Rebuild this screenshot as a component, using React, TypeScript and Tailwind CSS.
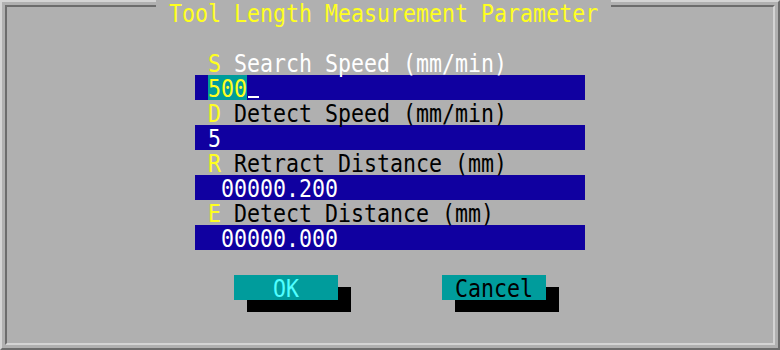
import React from "react";

const T = ({ children, className = "" }: { children: React.ReactNode; className?: string }) => (
  <span className={"inline-block origin-left scale-x-[0.9] translate-y-[2px] whitespace-pre " + className}>{children}</span>
);

const Label = ({ k, text, active }: { k: string; text: string; active?: boolean }) => (
  <div className="h-[25px] flex pl-[13px]">
    <div className="w-[13px]">
      <T className="text-[#ffff20]">{k}</T>
    </div>
    <div className="pl-[13px]">
      <T className={active ? "text-white" : "text-black"}>{text}</T>
    </div>
  </div>
);

const Field = ({ children }: { children: React.ReactNode }) => (
  <div className="h-[25px] w-[390px] bg-[#1000a0] flex pl-[13px] text-white">{children}</div>
);

export default function App() {
  return (
    <div
      className="relative w-[780px] h-[350px] bg-[#b0b0b0] overflow-hidden text-[24px] leading-[25px]"
      style={{ fontFamily: '"DejaVu Sans Mono", monospace' }}
    >
      <div className="w-full h-full border-2 border-t-[#d4d4d4] border-l-[#d4d4d4] border-r-[#6c6c6c] border-b-[#6c6c6c] p-[3px]">
        <div className="w-full h-full border-2 border-t-[#6c6c6c] border-l-[#6c6c6c] border-r-[#d4d4d4] border-b-[#d4d4d4] pt-[43px] pl-[188px]">
          <div className="w-[390px] flex flex-col">
            <Label k="S" text="Search Speed (mm/min)" active />
            <Field>
              <div className="w-[39px] h-[25px] bg-[#009c9c]">
                <T className="text-[#ffff20]">500</T>
              </div>
              <div className="w-[13px] h-[25px] pl-[1px] pt-[21px]">
                <div className="w-[11px] h-[2px] bg-white" />
              </div>
            </Field>
            <Label k="D" text="Detect Speed (mm/min)" />
            <Field>
              <T>5</T>
            </Field>
            <Label k="R" text="Retract Distance (mm)" />
            <Field>
              <T> 00000.200</T>
            </Field>
            <Label k="E" text="Detect Distance (mm)" />
            <Field>
              <T> 00000.000</T>
            </Field>
            <div className="h-[25px]" />
            <div className="flex pl-[39px] gap-[104px]">
              <div className="w-[104px] h-[25px] bg-[#009c9c] shadow-[13px_12px_0_#000]">
                <T className="text-[#50ffff]">{"   OK   "}</T>
              </div>
              <div className="w-[104px] h-[25px] bg-[#009c9c] shadow-[13px_12px_0_#000]">
                <T className="text-black">{" Cancel "}</T>
              </div>
            </div>
          </div>
        </div>
      </div>
      <div className="absolute top-0 left-[156px] w-[455px] h-[25px] bg-[#b0b0b0]">
        <T className="text-[#ffff20]">{" Tool Length Measurement Parameter "}</T>
      </div>
    </div>
  );
}
